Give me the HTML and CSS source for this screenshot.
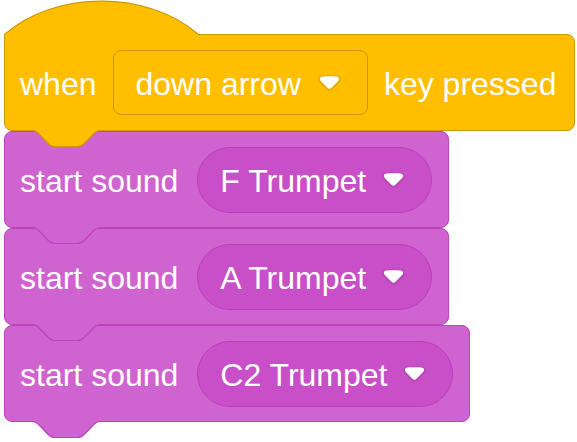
FILE: index.html
```html
<!DOCTYPE html>
<html lang="en">
<head>
    <meta charset="UTF-8">
    <title>when down arrow key pressed</title>
    <link rel="stylesheet" href="styles.css">
</head>
<body>
    <div class="script">
        <div class="block hat">
            <svg class="hat-top" width="196" height="37" viewBox="0 0 196 37">
                <path class="hat-fill" d="M0.5,34.5 C51,-9.9 143.9,-9.9 194.5,34.5 L194.5,36 L1,36 L1,34.5 Z"/>
                <path class="hat-line" d="M0.5,34.5 C51,-9.9 143.9,-9.9 194.5,34.5"/>
            </svg>
            <span class="label">when</span>
            <div class="menu">
                <span>down arrow</span>
                <svg class="arrow" width="23" height="16" viewBox="0 0 12.71 8.79">
                    <path class="arrow-shadow" d="M12.71,2.44A2.41,2.41,0,0,1,12,4.16L8.08,8.08a2.45,2.45,0,0,1-3.45,0L0.72,4.16A2.42,2.42,0,0,1,0,2.44,2.48,2.48,0,0,1,.71.71C1,0.47,1.43,0,6.36,0S11.75,0.46,12,.71A2.44,2.44,0,0,1,12.71,2.44Z"/>
                    <path class="arrow-head" d="M6.34,7.55a1.35,1.35,0,0,1-1-.42L1.42,3.21a1.38,1.38,0,0,1,0-1.94C1.62,1.07,2.16.73,6.34.73s4.72.34,4.92.54a1.37,1.37,0,0,1,0,1.94L7.29,7.13A1.35,1.35,0,0,1,6.34,7.55Z"/>
                </svg>
            </div>
            <span class="label">key pressed</span>
            <svg class="tab" width="70" height="19" viewBox="0 0 70 19">
                <path class="tab-fill" d="M0,0.5 c3.8,0 5.7,2 7.6,4 l7.6,8 c1.9,2 3.8,4 7.6,4 h22.8 c3.8,0 5.7,-2 7.6,-4 l7.6,-8 c1.9,-2 3.8,-4 7.6,-4 V0 H0 Z"/>
                <path class="tab-line" d="M0,0.5 c3.8,0 5.7,2 7.6,4 l7.6,8 c1.9,2 3.8,4 7.6,4 h22.8 c3.8,0 5.7,-2 7.6,-4 l7.6,-8 c1.9,-2 3.8,-4 7.6,-4"/>
            </svg>
        </div>

        <div class="block sound">
            <span class="label">start sound</span>
            <div class="menu oval">
                <span>F Trumpet</span>
                <svg class="arrow" width="23" height="16" viewBox="0 0 12.71 8.79">
                    <path class="arrow-shadow" d="M12.71,2.44A2.41,2.41,0,0,1,12,4.16L8.08,8.08a2.45,2.45,0,0,1-3.45,0L0.72,4.16A2.42,2.42,0,0,1,0,2.44,2.48,2.48,0,0,1,.71.71C1,0.47,1.43,0,6.36,0S11.75,0.46,12,.71A2.44,2.44,0,0,1,12.71,2.44Z"/>
                    <path class="arrow-head" d="M6.34,7.55a1.35,1.35,0,0,1-1-.42L1.42,3.21a1.38,1.38,0,0,1,0-1.94C1.62,1.07,2.16.73,6.34.73s4.72.34,4.92.54a1.37,1.37,0,0,1,0,1.94L7.29,7.13A1.35,1.35,0,0,1,6.34,7.55Z"/>
                </svg>
            </div>
            <svg class="tab" width="70" height="19" viewBox="0 0 70 19">
                <path class="tab-fill" d="M0,0.5 c3.8,0 5.7,2 7.6,4 l7.6,8 c1.9,2 3.8,4 7.6,4 h22.8 c3.8,0 5.7,-2 7.6,-4 l7.6,-8 c1.9,-2 3.8,-4 7.6,-4 V0 H0 Z"/>
                <path class="tab-line" d="M0,0.5 c3.8,0 5.7,2 7.6,4 l7.6,8 c1.9,2 3.8,4 7.6,4 h22.8 c3.8,0 5.7,-2 7.6,-4 l7.6,-8 c1.9,-2 3.8,-4 7.6,-4"/>
            </svg>
        </div>

        <div class="block sound">
            <span class="label">start sound</span>
            <div class="menu oval">
                <span>A Trumpet</span>
                <svg class="arrow" width="23" height="16" viewBox="0 0 12.71 8.79">
                    <path class="arrow-shadow" d="M12.71,2.44A2.41,2.41,0,0,1,12,4.16L8.08,8.08a2.45,2.45,0,0,1-3.45,0L0.72,4.16A2.42,2.42,0,0,1,0,2.44,2.48,2.48,0,0,1,.71.71C1,0.47,1.43,0,6.36,0S11.75,0.46,12,.71A2.44,2.44,0,0,1,12.71,2.44Z"/>
                    <path class="arrow-head" d="M6.34,7.55a1.35,1.35,0,0,1-1-.42L1.42,3.21a1.38,1.38,0,0,1,0-1.94C1.62,1.07,2.16.73,6.34.73s4.72.34,4.92.54a1.37,1.37,0,0,1,0,1.94L7.29,7.13A1.35,1.35,0,0,1,6.34,7.55Z"/>
                </svg>
            </div>
            <svg class="tab" width="70" height="19" viewBox="0 0 70 19">
                <path class="tab-fill" d="M0,0.5 c3.8,0 5.7,2 7.6,4 l7.6,8 c1.9,2 3.8,4 7.6,4 h22.8 c3.8,0 5.7,-2 7.6,-4 l7.6,-8 c1.9,-2 3.8,-4 7.6,-4 V0 H0 Z"/>
                <path class="tab-line" d="M0,0.5 c3.8,0 5.7,2 7.6,4 l7.6,8 c1.9,2 3.8,4 7.6,4 h22.8 c3.8,0 5.7,-2 7.6,-4 l7.6,-8 c1.9,-2 3.8,-4 7.6,-4"/>
            </svg>
        </div>

        <div class="block sound">
            <span class="label">start sound</span>
            <div class="menu oval">
                <span>C2 Trumpet</span>
                <svg class="arrow" width="23" height="16" viewBox="0 0 12.71 8.79">
                    <path class="arrow-shadow" d="M12.71,2.44A2.41,2.41,0,0,1,12,4.16L8.08,8.08a2.45,2.45,0,0,1-3.45,0L0.72,4.16A2.42,2.42,0,0,1,0,2.44,2.48,2.48,0,0,1,.71.71C1,0.47,1.43,0,6.36,0S11.75,0.46,12,.71A2.44,2.44,0,0,1,12.71,2.44Z"/>
                    <path class="arrow-head" d="M6.34,7.55a1.35,1.35,0,0,1-1-.42L1.42,3.21a1.38,1.38,0,0,1,0-1.94C1.62,1.07,2.16.73,6.34.73s4.72.34,4.92.54a1.37,1.37,0,0,1,0,1.94L7.29,7.13A1.35,1.35,0,0,1,6.34,7.55Z"/>
                </svg>
            </div>
            <svg class="tab" width="70" height="19" viewBox="0 0 70 19">
                <path class="tab-fill" d="M0,0.5 c3.8,0 5.7,2 7.6,4 l7.6,8 c1.9,2 3.8,4 7.6,4 h22.8 c3.8,0 5.7,-2 7.6,-4 l7.6,-8 c1.9,-2 3.8,-4 7.6,-4 V0 H0 Z"/>
                <path class="tab-line" d="M0,0.5 c3.8,0 5.7,2 7.6,4 l7.6,8 c1.9,2 3.8,4 7.6,4 h22.8 c3.8,0 5.7,-2 7.6,-4 l7.6,-8 c1.9,-2 3.8,-4 7.6,-4"/>
            </svg>
        </div>
    </div>
</body>
</html>
```

FILE: styles.css
```css
body {
    margin: 0;
    background-color: white;
    font-family: "Liberation Sans", Arial, sans-serif;
}
.script {
    display: flex;
    flex-direction: column;
    align-items: flex-start;
    padding: 34px 0 20px 4px;
}
.block {
    position: relative;
    box-sizing: border-box;
    height: 97px;
    display: flex;
    align-items: center;
    border: 1px solid;
    border-radius: 8px;
    color: white;
    font-size: 32px;
}
.label {
    padding-top: 3px;
    white-space: nowrap;
}

/* hat block */
.hat {
    gap: 16px;
    padding: 0 18px 0 15px;
    background-color: #ffbf00;
    border-color: #cc9900;
    border-top-left-radius: 0;
}
.hat-top {
    position: absolute;
    left: -1px;
    top: -35px;
}
.hat-fill {
    fill: #ffbf00;
}
.hat-line {
    fill: none;
    stroke: #cc9900;
    stroke-width: 1.2;
}
.hat .tab-fill {
    fill: #ffbf00;
}
.hat .tab-line {
    stroke: #cc9900;
}

/* sound blocks */
.sound {
    gap: 19px;
    padding: 0 16px 0 15px;
    background-color: #cf63cf;
    border-color: #bd42bd;
}
.sound .tab-fill {
    fill: #cf63cf;
}
.sound .tab-line {
    stroke: #bd42bd;
}

/* dropdown fields */
.menu {
    box-sizing: border-box;
    height: 65px;
    display: flex;
    align-items: center;
    gap: 17px;
    padding: 3px 26px 0 22px;
    background-color: #ffbf00;
    border: 1px solid #cc9900;
    border-radius: 8px;
    white-space: nowrap;
}
.oval {
    height: 66px;
    gap: 16px;
    padding: 3px 26px 0 22px;
    background-color: #c94fc9;
    border-color: #b83fb8;
    border-radius: 33px;
}
.arrow {
    margin-top: -2px;
}
.arrow-shadow {
    fill: #231f20;
    opacity: 0.1;
}
.arrow-head {
    fill: white;
}

/* bottom connector */
.tab {
    position: absolute;
    left: 27px;
    top: 100%;
    z-index: 2;
}
.tab-line {
    fill: none;
    stroke-width: 1.2;
}
```
